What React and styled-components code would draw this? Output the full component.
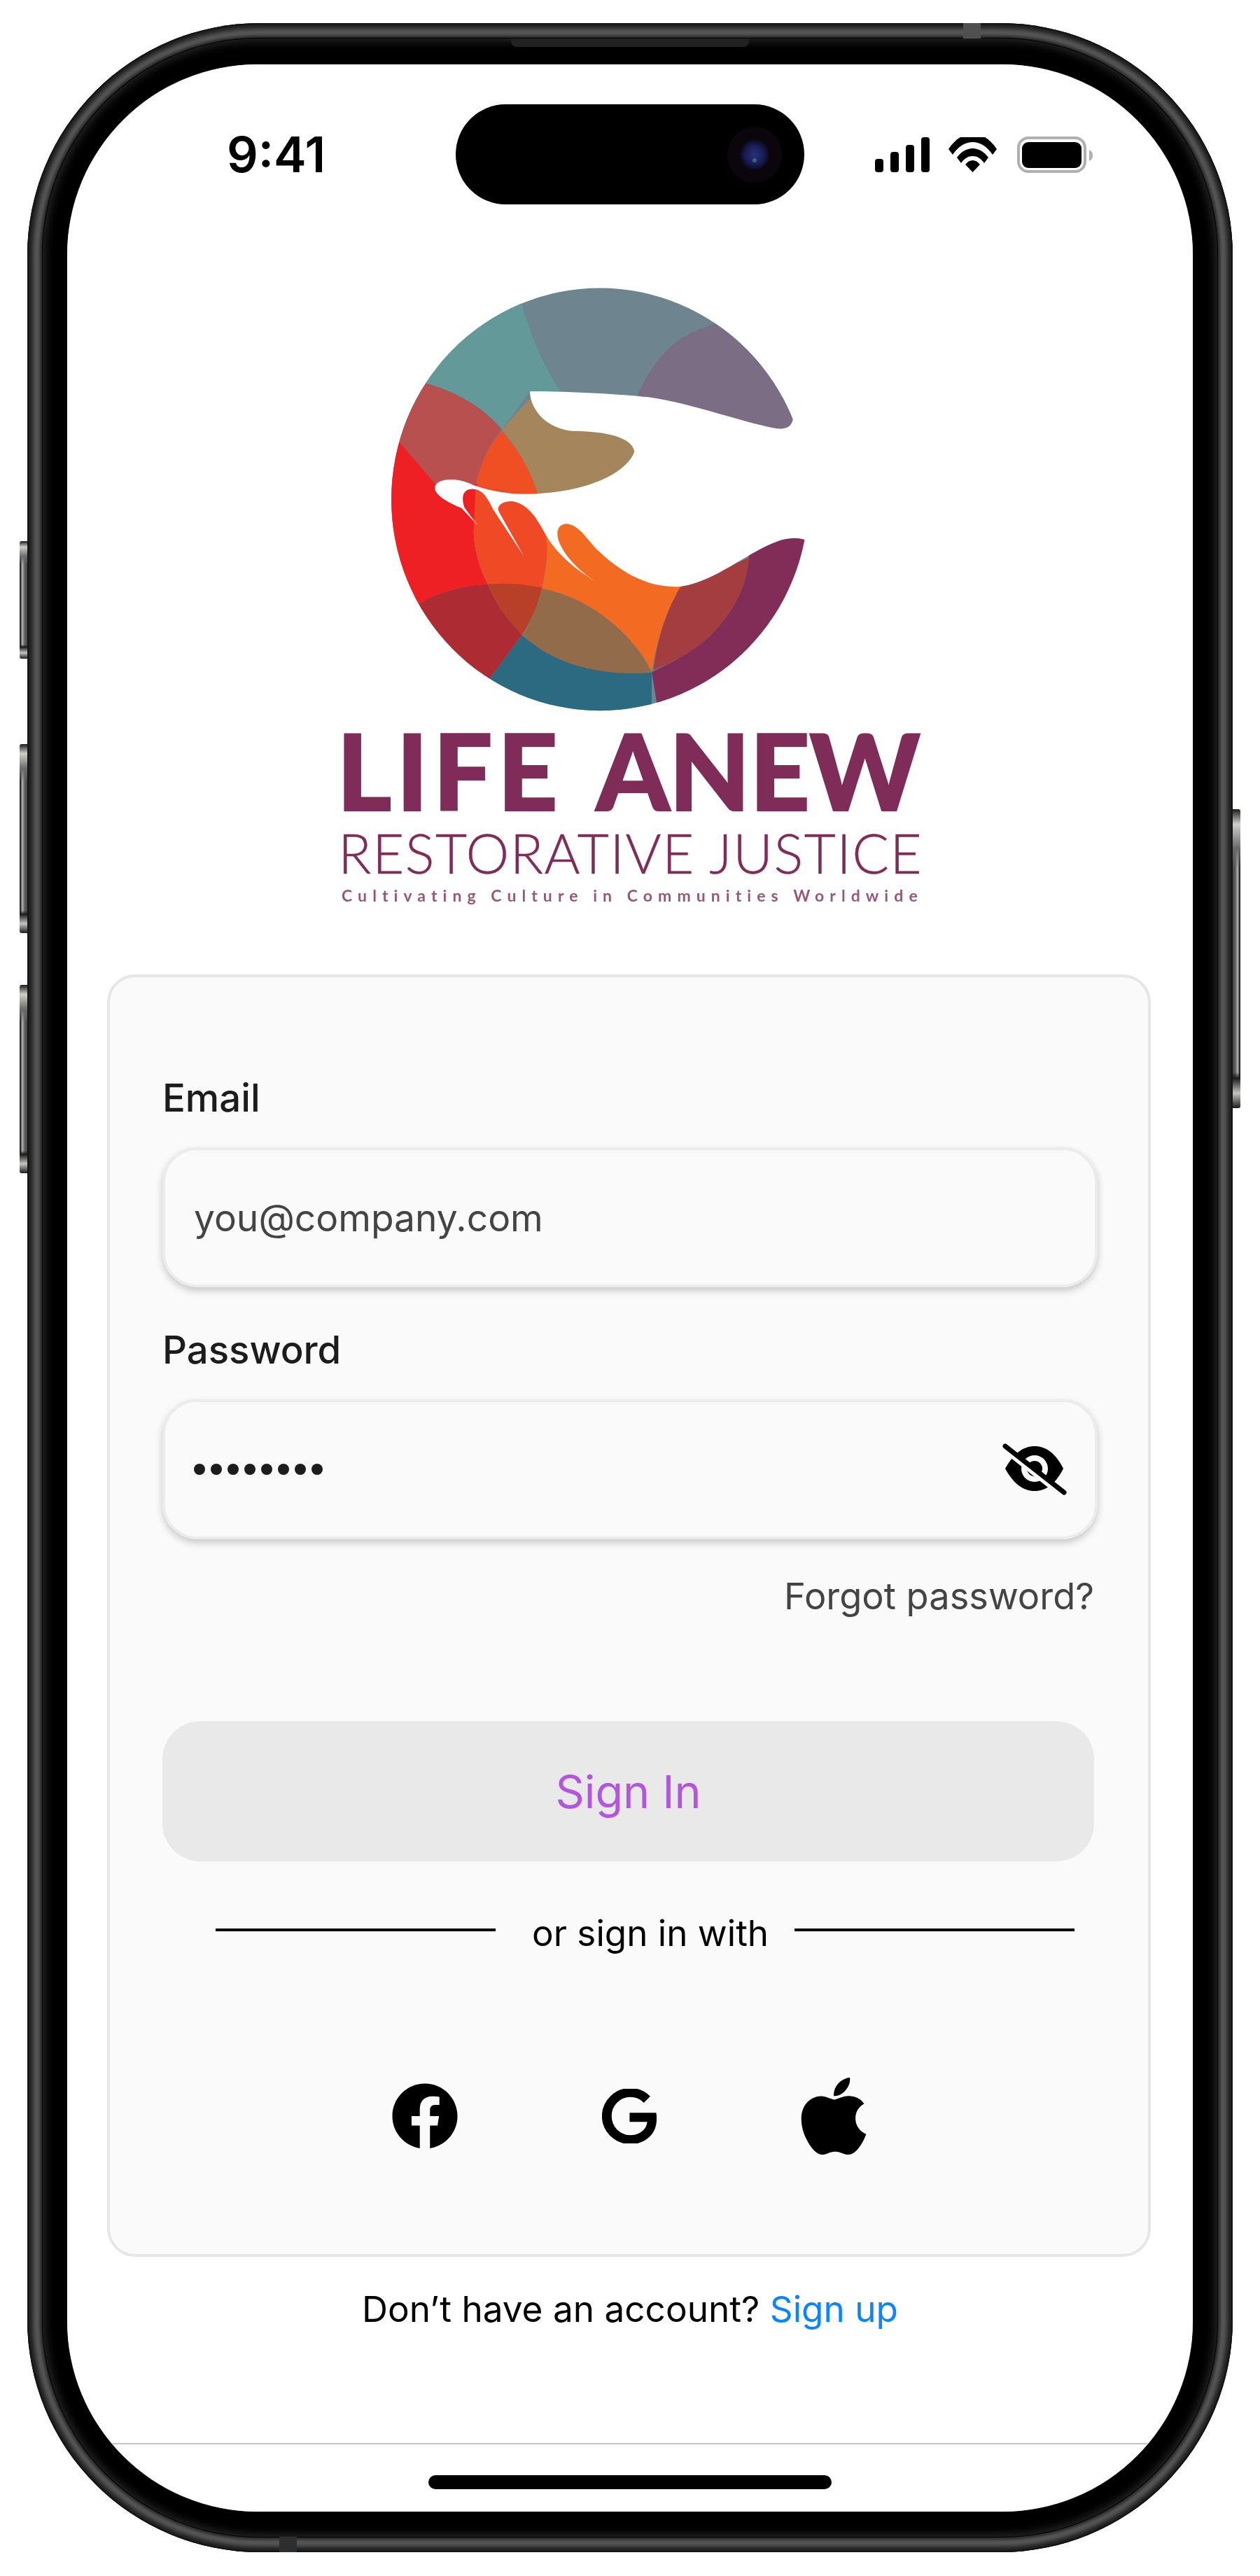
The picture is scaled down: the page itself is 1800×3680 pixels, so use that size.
import React from "react";
import styled, { createGlobalStyle } from "styled-components";
import { FaFacebook, FaApple } from "react-icons/fa";
import { SiGoogle } from "react-icons/si";

const GlobalStyle = createGlobalStyle`
  html, body { margin: 0; padding: 0; background: #fff; }
  * { box-sizing: border-box; }
  body { font-family: Inter, "Liberation Sans", sans-serif; width: 1800px; height: 3680px; overflow: hidden; }
`;

const Page = styled.div`
  width: 1800px;
  height: 3680px;
  padding: 33px 39px 34px;
  background: #fff;
`;

const Phone = styled.div`
  position: relative;
  width: 1722px;
  height: 3613px;
  padding: 22px;
  border-radius: 332px;
  background: #5c5c5c;
  box-shadow: inset 0 0 0 2px #141414, inset 0 0 7px 8px #1c1c1c;
`;

const Bezel = styled.div`
  height: 100%;
  padding: 37px 35px 36px;
  border-radius: 308px;
  background: #000;
  box-shadow: 0 0 0 1px #000, 0 0 5px 4px #202020, inset 0 0 14px 3px #2a2a2a;
`;

const Screen = styled.div`
  display: flex;
  flex-direction: column;
  height: 100%;
  overflow: hidden;
  border-radius: 272px;
  background: #fff;
  box-shadow: 0 0 1px #aaa;
`;

const SideButton = styled.div`
  position: absolute;
  top: ${(p) => p.$top}px;
  ${(p) => (p.$right ? "right: -11px;" : "left: -11px;")}
  width: 11px;
  height: ${(p) => p.$height}px;
  border-radius: ${(p) => (p.$right ? "0 3px 3px 0" : "3px 0 0 3px")};
  background:
    linear-gradient(180deg, #1b1b1b 0, #cfcfc8 5%, #6a6a6a 13%, transparent 20%, transparent 88%, #1b1b1b 90%, #c4c4c0 95%, #1b1b1b 100%),
    linear-gradient(${(p) => (p.$right ? "270deg" : "90deg")}, #222 0, #333 15%, #bcbcbc 35%, #666 60%, #444 100%);
`;

const Antenna = styled.div`
  position: absolute;
  left: ${(p) => p.$left}px;
  ${(p) => (p.$bottom ? "bottom: 0;" : "top: 0;")}
  width: 25px;
  height: 22px;
  background: ${(p) => (p.$bottom ? "#2c2e30" : "#505050")};
`;

const Speaker = styled.div`
  position: absolute;
  top: 22px;
  left: 691px;
  width: 340px;
  height: 12px;
  border-radius: 0 0 8px 8px;
  background: #222;
`;

const StatusBar = styled.div`
  display: flex;
  align-items: center;
  padding: 57px 0 0 228px;
  flex: none;
`;

const Time = styled.div`
  width: 138px;
  margin-right: 189px;
  font-size: 70px;
  font-weight: 600;
  line-height: 80px;
  color: #000;
  white-space: nowrap;
`;

const Island = styled.div`
  display: flex;
  align-items: center;
  justify-content: flex-end;
  width: 498px;
  height: 143px;
  margin-right: 101px;
  padding-right: 31px;
  border-radius: 72px;
  background: #000;
`;

const StatusIcons = styled.div`
  display: flex;
  align-items: center;
`;

const LogoBlock = styled.div`
  display: flex;
  flex-direction: column;
  align-items: center;
  flex: none;
  height: 1100px;
  padding-top: 88px;
  color: #7f2c58;
`;

const LogoMark = styled.svg`
  display: block;
  width: 900px;
  height: 660px;
  flex: none;
  filter: blur(0.6px);
`;

const WordLife = styled.div`
  width: 824px;
  height: 116px;
  margin-top: 2px;
  text-indent: -7px;
  font-family: Lato, sans-serif;
  font-weight: 900;
  font-size: 150px;
  line-height: 116px;
  word-spacing: 12px;
  white-space: nowrap;
  -webkit-text-stroke: 2px #7f2c58;
  filter: blur(0.7px);
`;

const WordPart = styled.span`
  letter-spacing: ${(p) => p.$spacing}px;
`;

const WordRestorative = styled.div`
  width: 824px;
  height: 76px;
  margin-top: 22px;
  text-indent: -5px;
  font-family: Lato, sans-serif;
  font-weight: 300;
  font-size: 78px;
  line-height: 76px;
  letter-spacing: 1.55px;
  white-space: nowrap;
  -webkit-text-stroke: 0.5px #7f2c58;
  filter: blur(0.6px);
`;

const WordTag = styled.div`
  width: 824px;
  height: 30px;
  margin-top: 8px;
  font-family: Lato, sans-serif;
  font-weight: 700;
  font-size: 23px;
  line-height: 30px;
  letter-spacing: 8.06px;
  white-space: nowrap;
  opacity: 0.8;
  filter: blur(0.6px);
`;

const Card = styled.div`
  flex: none;
  width: 1491px;
  height: 1832px;
  margin: 0 57px;
  padding: 142px 75px 0;
  border: 4px solid #e6e6e6;
  border-radius: 40px;
  background: #fafafa;
`;

const Label = styled.div`
  height: 60px;
  margin-top: ${(p) => p.$mt || 0}px;
  margin-bottom: 41px;
  font-size: 54.5px;
  font-weight: 500;
  line-height: 60px;
  color: #1c1c1c;
`;

const InputBox = styled.div`
  display: flex;
  align-items: center;
  justify-content: space-between;
  width: 1336px;
  height: 200px;
  padding: 0 40px 0 41px;
  border: 4px solid #ececec;
  border-radius: 50px;
  background: #fafafa;
  box-shadow: 0 5px 11px rgba(0, 0, 0, 0.2);
`;

const Placeholder = styled.span`
  padding-top: 2px;
  font-size: 53.3px;
  color: #444;
  line-height: 60px;
`;

const Dots = styled.div`
  display: flex;
  gap: 8px;
`;

const Dot = styled.span`
  width: 16px;
  height: 16px;
  border-radius: 50%;
  background: #1c1c1c;
`;

const ForgotRow = styled.div`
  height: 60px;
  margin-top: 51px;
  padding-right: 2px;
  font-size: 52.4px;
  line-height: 60px;
  color: #444;
  text-align: right;
`;

const SignInButton = styled.div`
  display: flex;
  align-items: center;
  justify-content: center;
  width: 1331px;
  height: 200px;
  margin-top: 149px;
  padding-top: 2px;
  border-radius: 54px;
  background: #e9e9e9;
  color: #b455e0;
  font-size: 64.5px;
`;

const DividerRow = styled.div`
  display: flex;
  align-items: center;
  height: 60px;
  margin-top: 68px;
  padding-left: 76px;
  color: #000;
  font-size: 51.2px;
  line-height: 60px;
`;

const Rule = styled.span`
  flex: none;
  width: 400px;
  height: 4px;
  background: #000;
`;

const DividerText = styled.span`
  flex: none;
  width: 333px;
  margin: 0 42px 0 52px;
  transform: translateY(4px);
  white-space: nowrap;
`;

const SocialRow = styled.div`
  display: flex;
  justify-content: center;
  height: 120px;
  margin-top: 176px;
`;

const SocialCell = styled.div`
  display: flex;
  align-items: center;
  justify-content: center;
  width: 292px;
  color: #000;
`;

const GoogleGlyph = styled(SiGoogle)`
  stroke: #000;
  stroke-width: 0.7px;
`;

const Footer = styled.div`
  flex: none;
  height: 60px;
  margin-top: 44px;
  color: #000;
  font-size: 51.3px;
  line-height: 60px;
  text-align: center;
`;

const SignUp = styled.span`
  color: #0a84ff;
`;

const HomeArea = styled.div`
  display: flex;
  justify-content: center;
  flex: none;
  height: 98px;
  margin-top: auto;
  padding-top: 44px;
  border-top: 2px solid #c4c4c4;
`;

const HomeBar = styled.div`
  width: 576px;
  height: 20px;
  border-radius: 10px;
  background: #000;
`;

const Signal = () => (
  <svg width="78" height="50" viewBox="0 0 78 50" style={{ marginRight: 27 }}>
    <rect x="0" y="31" width="12" height="19" rx="4" />
    <rect x="22" y="21" width="12" height="29" rx="4" />
    <rect x="44" y="11" width="12" height="39" rx="4" />
    <rect x="66" y="0" width="12" height="50" rx="4" />
  </svg>
);

const Wifi = () => (
  <svg width="69" height="50" viewBox="0 0 69 50" style={{ marginRight: 29 }}>
    <path d="M0 22 C10 7 22 0 34.5 0 C47 0 59 7 69 22 L63 30 C55 18 45 12 34.5 12 C24 12 14 18 6 30 Z" transform="translate(0 -5)" />
    <path d="M12 32 C18 24 26 19 34.5 19 C43 19 51 24 57 32 L51 40 C46 33 41 30 34.5 30 C28 30 23 33 18 40 Z" transform="translate(0 -3)" />
    <path d="M24 39 C27 35 31 33 34.5 33 C38 33 42 35 45 39 L34.5 50 Z" />
  </svg>
);

const Battery = () => (
  <svg width="108" height="52" viewBox="0 0 108 52">
    <rect x="2" y="2" width="95" height="48" rx="14" fill="none" stroke="#b0b0b0" strokeWidth="4" />
    <rect x="7" y="8" width="85" height="37" rx="9" fill="#000" />
    <path d="M103 19 C107 21 108 24 108 27 C108 30 107 33 103 35 Z" fill="#b0b0b0" />
  </svg>
);

const Camera = () => (
  <svg width="80" height="100" viewBox="0 0 80 100">
    <defs>
      <radialGradient id="lens" cx="50%" cy="50%" r="50%">
        <stop offset="0%" stopColor="#2b2f7a" />
        <stop offset="60%" stopColor="#1b1d55" />
        <stop offset="100%" stopColor="#08081c" />
      </radialGradient>
    </defs>
    <ellipse cx="40" cy="50" rx="39" ry="40" fill="#0a060c" />
    <ellipse cx="40" cy="50" rx="21" ry="22" fill="url(#lens)" />
    <circle cx="40" cy="58" r="3" fill="#2e6a6a" />
  </svg>
);

const EyeOff = () => (
  <svg width="92" height="74" viewBox="0 0 92 74">
    <path d="M4 36 C16 14 30 4 46 4 C62 4 76 14 87 36 C76 58 62 68 46 68 C30 68 16 58 4 36 Z" fill="#000" />
    <circle cx="46" cy="36" r="19" fill="#fafafa" />
    <circle cx="46" cy="36" r="11" fill="#000" />
    <path d="M3 8 L84 72" stroke="#fafafa" strokeWidth="9" />
    <path d="M4 4 L88 70" stroke="#000" strokeWidth="7" strokeLinecap="round" />
  </svg>
);

const Logo = () => (
  <LogoMark viewBox="0 0 1568 1568" preserveAspectRatio="none">
    <defs>
      <clipPath id="disc">
        <ellipse cx="709" cy="792" rx="519" ry="717" />
      </clipPath>
    </defs>
    <g clipPath="url(#disc)">
      <rect x="150" y="50" width="1150" height="1500" fill="#6e8590" />
      <path d="M150 50 L515 50 L515 130 C540 250 570 340 610 425 L535 425 L465 555 C420 480 350 425 280 400 L150 400 Z" fill="#64999a" />
      <path d="M1000 195 C900 230 850 300 800 445 L1160 560 L1300 560 L1300 50 L1000 50 Z" fill="#7a6d84" />
      <path d="M275 398 C350 425 420 480 465 555 C430 610 410 680 405 740 L300 740 L205 590 L150 590 L150 398 Z" fill="#b85050" />
      <path d="M465 560 C505 620 540 700 555 780 L400 745 C410 680 430 610 465 560 Z" fill="#f04e23" />
      <path d="M535 450 L465 555 C505 620 540 700 555 780 L800 780 L800 450 Z" fill="#a5865c" />
      <path d="M150 590 L205 590 L300 740 L405 740 L395 900 C395 960 410 1030 430 1080 C370 1085 310 1105 260 1145 L150 1145 Z" fill="#ee2024" />
      <path d="M400 745 L560 780 L578 950 C578 1000 572 1050 565 1092 L430 1080 C410 1030 395 960 395 900 Z" fill="#ef4a25" />
      <path d="M560 780 L1000 1080 L910 1090 C870 1180 850 1280 838 1375 C800 1270 700 1130 565 1095 C572 1050 578 1000 578 950 Z" fill="#f36a22" />
      <path d="M260 1145 C310 1105 370 1085 430 1080 C450 1150 480 1200 515 1252 L435 1400 L150 1400 L150 1145 Z" fill="#ad2b33" />
      <path d="M430 1080 C480 1075 520 1080 565 1092 C555 1150 540 1200 515 1252 C480 1200 450 1150 430 1080 Z" fill="#b94028" />
      <path d="M565 1095 C700 1130 800 1270 838 1378 C740 1392 600 1380 518 1252 C540 1200 555 1150 565 1095 Z" fill="#926c4a" />
      <path d="M515 1252 C600 1360 720 1392 838 1380 L838 1560 L350 1560 L435 1400 Z" fill="#2c6a81" />
      <path d="M910 1088 L1080 990 C1075 1090 1040 1180 980 1260 C940 1310 890 1345 842 1372 C850 1280 870 1180 910 1088 Z" fill="#a33d3f" />
      <path d="M1080 990 L1060 850 L1300 800 L1300 1560 L860 1560 L838 1378 C890 1345 940 1310 980 1260 C1040 1180 1075 1090 1080 990 Z" fill="#822c58" />
    </g>
    <path
      d="M535 425 C640 425 760 435 830 445 C950 470 1060 530 1150 552 C1180 555 1195 540 1190 480 L1450 480 L1450 925 L1232 950 C1228 922 1195 918 1160 930 C1080 965 1000 1070 910 1088 C830 1095 760 1040 700 960 C670 915 655 878 625 875 C600 878 598 915 612 950 C630 1000 670 1050 712 1082 C665 1045 620 1000 590 945 C560 890 545 810 490 798 C465 798 450 815 458 835 L520 985 L445 830 C430 790 420 760 395 757 C370 755 362 780 372 820 L405 880 L365 822 C335 805 298 780 298 752 C300 725 340 715 380 735 C430 765 490 778 560 772 C700 760 780 690 795 630 C790 580 720 560 640 560 C570 550 535 480 535 425 Z"
      fill="#fff"
    />
  </LogoMark>
);

export default function App() {
  return (
    <Page>
      <GlobalStyle />
      <Phone>
        <SideButton $top={740} $height={168} />
        <SideButton $top={1030} $height={270} />
        <SideButton $top={1374} $height={269} />
        <SideButton $right $top={1123} $height={427} />
        <Antenna $left={1337} />
        <Antenna $bottom $left={360} />
        <Speaker />
        <Bezel>
          <Screen>
            <StatusBar>
              <Time>9:41</Time>
              <Island>
                <Camera />
              </Island>
              <StatusIcons>
                <Signal />
                <Wifi />
                <Battery />
              </StatusIcons>
            </StatusBar>
            <LogoBlock>
              <Logo />
              <WordLife>
                <WordPart $spacing={7}>LIFE</WordPart> <WordPart $spacing={-0.9}>ANEW</WordPart>
              </WordLife>
              <WordRestorative>RESTORATIVE JUSTICE</WordRestorative>
              <WordTag>Cultivating Culture in Communities Worldwide</WordTag>
            </LogoBlock>
            <Card>
              <Label>Email</Label>
              <InputBox>
                <Placeholder>you@company.com</Placeholder>
              </InputBox>
              <Label $mt={59}>Password</Label>
              <InputBox>
                <Dots>
                  {Array.from({ length: 8 }, (_, i) => (
                    <Dot key={i} />
                  ))}
                </Dots>
                <EyeOff />
              </InputBox>
              <ForgotRow>Forgot password?</ForgotRow>
              <SignInButton>Sign In</SignInButton>
              <DividerRow>
                <Rule />
                <DividerText>or sign in with</DividerText>
                <Rule />
              </DividerRow>
              <SocialRow>
                <SocialCell>
                  <FaFacebook size={96} />
                </SocialCell>
                <SocialCell>
                  <GoogleGlyph size={78} />
                </SocialCell>
                <SocialCell>
                  <FaApple size={126} />
                </SocialCell>
              </SocialRow>
            </Card>
            <Footer>
              Don’t have an account? <SignUp>Sign up</SignUp>
            </Footer>
            <HomeArea>
              <HomeBar />
            </HomeArea>
          </Screen>
        </Bezel>
      </Phone>
    </Page>
  );
}
